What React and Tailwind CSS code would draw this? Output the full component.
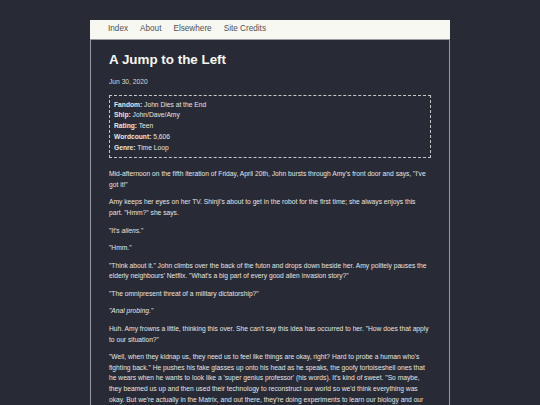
export default function App() {
  const font = { fontFamily: '"Liberation Sans", Arial, sans-serif' };
  return (
    <div className="min-h-screen bg-[#282a36] pt-[20px]" style={font}>
      <div className="mx-auto w-[360px]">
        <nav className="flex h-[20px] items-center gap-[12px] border-b border-[#9a9aa6] bg-[#f8f8f2] pl-[18px] text-[8.2px] text-[#505050]">
          <span>Index</span>
          <span>About</span>
          <span>Elsewhere</span>
          <span>Site Credits</span>
        </nav>
        <main className="border-x border-[#9a9aa6] pl-[18px] pr-[18.5px] pb-[20px] text-[6.7px] leading-[10.7px] text-[#e6e6e2]">
          <h1 className="pt-[12px] text-[13.4px] font-bold leading-[16px] text-[#f8f8f2]">
            A Jump to the Left
          </h1>
          <div className="mt-[9px] text-[#d8d8d4]">Jun 30, 2020</div>
          <div className="mt-[7px] border border-dashed border-[#c8c8c8] p-[4px]">
            <div><b>Fandom:</b> John Dies at the End</div>
            <div><b>Ship:</b> John/Dave/Amy</div>
            <div><b>Rating:</b> Teen</div>
            <div><b>Wordcount:</b> 5,606</div>
            <div><b>Genre:</b> Time Loop</div>
          </div>
          <div className="mt-[11px] flex flex-col gap-[6.8px]">
            <p>
              Mid-afternoon on the fifth iteration of Friday, April 20th, John bursts through Amy's front door and says, "I've got it!"
            </p>
            <p>
              Amy keeps her eyes on her TV. Shinji's about to get in the robot for the first time; she always enjoys this part. "Hmm?" she says.
            </p>
            <p>
              "It's <i>aliens</i>."
            </p>
            <p>"Hmm."</p>
            <p>
              "Think about it." John climbs over the back of the futon and drops down beside her. Amy politely pauses the elderly neighbours' Netflix. "What's a big part of every good alien invasion story?"
            </p>
            <p>"The omnipresent threat of a military dictatorship?"</p>
            <p>
              <i>"Anal probing."</i>
            </p>
            <p>
              Huh. Amy frowns a little, thinking this over. She can't say this idea has occurred to her. "How does that apply to our situation?"
            </p>
            <p>
              "Well, when they kidnap us, they need us to feel like things are okay, right? Hard to probe a human who's fighting back." He pushes his fake glasses up onto his head as he speaks, the goofy tortoiseshell ones that he wears when he wants to look like a 'super genius professor' (his words). It's kind of sweet. "So maybe, they beamed us up and then used their technology to reconstruct our world so we'd think everything was okay. But we're actually in the Matrix, and out there, they're doing experiments to learn our biology and our weaknesses, so they can take over the planet."
            </p>
          </div>
        </main>
      </div>
    </div>
  );
}
